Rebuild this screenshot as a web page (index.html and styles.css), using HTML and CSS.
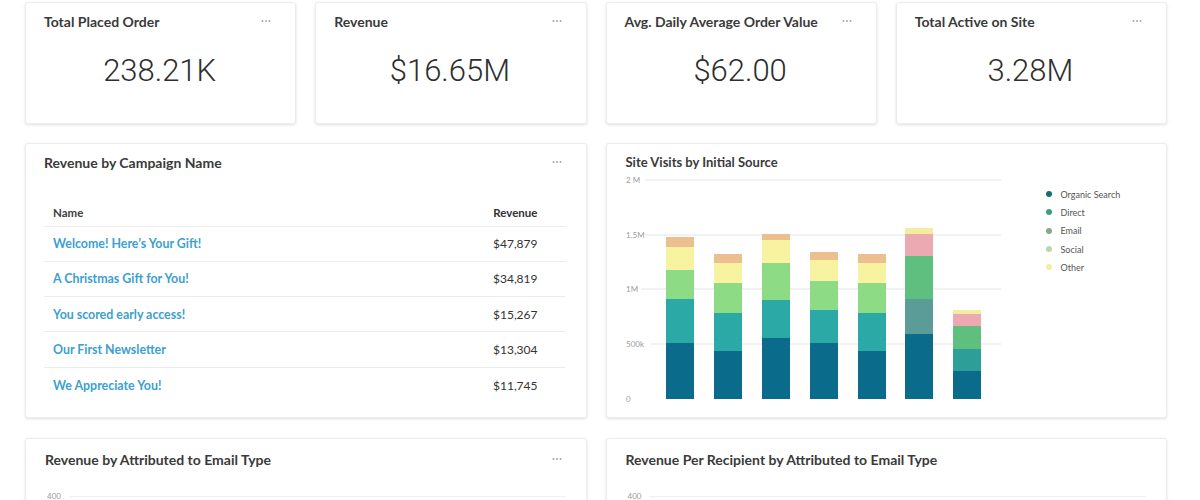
FILE: index.html
```html
<!DOCTYPE html>
<html lang="en">
<head>
<meta charset="utf-8">
<title>Dashboard</title>
<link rel="stylesheet" href="styles.css">
</head>
<body>
<div class="dash">
  <div class="kpis">
    <div class="card kpi">
      <div class="card-head"><span class="title">Total Placed Order</span><svg class="more" width="10" height="4" viewBox="0 0 10 4"><circle cx="1.5" cy="2" r="1"/><circle cx="5" cy="2" r="1"/><circle cx="8.5" cy="2" r="1"/></svg></div>
      <div class="value">238.21K</div>
    </div>
    <div class="card kpi">
      <div class="card-head"><span class="title">Revenue</span><svg class="more" width="10" height="4" viewBox="0 0 10 4"><circle cx="1.5" cy="2" r="1"/><circle cx="5" cy="2" r="1"/><circle cx="8.5" cy="2" r="1"/></svg></div>
      <div class="value">$16.65M</div>
    </div>
    <div class="card kpi">
      <div class="card-head"><span class="title">Avg. Daily Average Order Value</span><svg class="more" width="10" height="4" viewBox="0 0 10 4"><circle cx="1.5" cy="2" r="1"/><circle cx="5" cy="2" r="1"/><circle cx="8.5" cy="2" r="1"/></svg></div>
      <div class="value">$62.00</div>
    </div>
    <div class="card kpi">
      <div class="card-head"><span class="title">Total Active on Site</span><svg class="more" width="10" height="4" viewBox="0 0 10 4"><circle cx="1.5" cy="2" r="1"/><circle cx="5" cy="2" r="1"/><circle cx="8.5" cy="2" r="1"/></svg></div>
      <div class="value">3.28M</div>
    </div>
  </div>

  <div class="row2">
    <div class="card table-card">
      <div class="card-head"><span class="title">Revenue by Campaign Name</span><svg class="more" width="10" height="4" viewBox="0 0 10 4"><circle cx="1.5" cy="2" r="1"/><circle cx="5" cy="2" r="1"/><circle cx="8.5" cy="2" r="1"/></svg></div>
      <table class="camp">
        <thead><tr><th class="name">Name</th><th class="rev">Revenue</th></tr></thead>
        <tbody>
          <tr><td class="name"><a>Welcome! Here’s Your Gift!</a></td><td class="rev">$47,879</td></tr>
          <tr><td class="name"><a>A Christmas Gift for You!</a></td><td class="rev">$34,819</td></tr>
          <tr><td class="name"><a>You scored early access!</a></td><td class="rev">$15,267</td></tr>
          <tr><td class="name"><a>Our First Newsletter</a></td><td class="rev">$13,304</td></tr>
          <tr><td class="name"><a>We Appreciate You!</a></td><td class="rev">$11,745</td></tr>
        </tbody>
      </table>
    </div>

    <div class="card chart-card">
      <div class="card-head"><span class="title small">Site Visits by Initial Source</span></div>
      <div class="chart-body">
        <svg class="plot" width="390" height="236" viewBox="0 0 390 236">
          <g class="grid">
            <line x1="22" y1="9" x2="378" y2="9"/>
            <line x1="22" y1="64" x2="378" y2="64"/>
            <line x1="18" y1="118" x2="378" y2="118"/>
            <line x1="28" y1="173" x2="378" y2="173"/>
          </g>
          <g class="axis">
            <text x="3" y="12">2 M</text>
            <text x="3" y="67">1.5M</text>
            <text x="3" y="121">1M</text>
            <text x="3" y="176">500k</text>
            <text x="3" y="231">0</text>
          </g>
          <g class="bars">
            <rect x="43" y="66" width="28" height="10" fill="#ecc08e"/>
            <rect x="43" y="76" width="28" height="23" fill="#f7f3a1"/>
            <rect x="43" y="99" width="28" height="29" fill="#8ddc85"/>
            <rect x="43" y="128" width="28" height="44" fill="#2aa9a6"/>
            <rect x="43" y="172" width="28" height="56" fill="#0a6b8a"/>

            <rect x="91" y="83" width="28" height="9" fill="#ecc08e"/>
            <rect x="91" y="92" width="28" height="20" fill="#f7f3a1"/>
            <rect x="91" y="112" width="28" height="30" fill="#8ddc85"/>
            <rect x="91" y="142" width="28" height="38" fill="#2aa9a6"/>
            <rect x="91" y="180" width="28" height="48" fill="#0a6b8a"/>

            <rect x="139" y="63" width="28" height="6" fill="#ecc08e"/>
            <rect x="139" y="69" width="28" height="23" fill="#f7f3a1"/>
            <rect x="139" y="92" width="28" height="37" fill="#8ddc85"/>
            <rect x="139" y="129" width="28" height="38" fill="#2aa9a6"/>
            <rect x="139" y="167" width="28" height="61" fill="#0a6b8a"/>

            <rect x="187" y="81" width="28" height="8" fill="#ecc08e"/>
            <rect x="187" y="89" width="28" height="21" fill="#f7f3a1"/>
            <rect x="187" y="110" width="28" height="29" fill="#8ddc85"/>
            <rect x="187" y="139" width="28" height="33" fill="#2aa9a6"/>
            <rect x="187" y="172" width="28" height="56" fill="#0a6b8a"/>

            <rect x="235" y="83" width="28" height="9" fill="#ecc08e"/>
            <rect x="235" y="92" width="28" height="20" fill="#f7f3a1"/>
            <rect x="235" y="112" width="28" height="30" fill="#8ddc85"/>
            <rect x="235" y="142" width="28" height="38" fill="#2aa9a6"/>
            <rect x="235" y="180" width="28" height="48" fill="#0a6b8a"/>

            <rect x="282" y="57" width="28" height="6" fill="#f4ec9e"/>
            <rect x="282" y="63" width="28" height="22" fill="#eca9b2"/>
            <rect x="282" y="85" width="28" height="43" fill="#5fbf7f"/>
            <rect x="282" y="128" width="28" height="35" fill="#5c9c98"/>
            <rect x="282" y="163" width="28" height="65" fill="#0a6b8a"/>

            <rect x="330" y="139" width="28" height="4" fill="#f4ec9e"/>
            <rect x="330" y="143" width="28" height="12" fill="#eca9b2"/>
            <rect x="330" y="155" width="28" height="23" fill="#5fbf7f"/>
            <rect x="330" y="178" width="28" height="22" fill="#2e9e98"/>
            <rect x="330" y="200" width="28" height="28" fill="#0a6b8a"/>
          </g>
        </svg>
        <ul class="legend">
          <li><span class="dot c1"></span>Organic Search</li>
          <li><span class="dot c2"></span>Direct</li>
          <li><span class="dot c3"></span>Email</li>
          <li><span class="dot c4"></span>Social</li>
          <li><span class="dot c5"></span>Other</li>
        </ul>
      </div>
    </div>
  </div>

  <div class="row3">
    <div class="card bottom-card">
      <div class="card-head"><span class="title">Revenue by Attributed to Email Type</span><svg class="more" width="10" height="4" viewBox="0 0 10 4"><circle cx="1.5" cy="2" r="1"/><circle cx="5" cy="2" r="1"/><circle cx="8.5" cy="2" r="1"/></svg></div>
      <div class="mini-axis"><span class="tick">400</span><span class="gline"></span></div>
    </div>
    <div class="card bottom-card">
      <div class="card-head"><span class="title">Revenue Per Recipient by Attributed to Email Type</span></div>
      <div class="mini-axis"><span class="tick">400</span><span class="gline"></span></div>
    </div>
  </div>
</div>
</body>
</html>
```

FILE: styles.css
```css
* { box-sizing: border-box; }

html, body {
  margin: 0;
  padding: 0;
  background: #ffffff;
  overflow: hidden;
}

body {
  font-family: Lato, "Open Sans", "Liberation Sans", sans-serif;
  color: #333;
}

.dash {
  width: 1142px;
  margin-left: 25px;
  padding-top: 2px;
}

.card {
  background: #fff;
  border: 1px solid #ededed;
  border-radius: 3px;
  box-shadow: 0 1px 3px rgba(0, 0, 0, 0.13);
}

.card-head {
  display: flex;
  justify-content: space-between;
  align-items: center;
  height: 16px;
}

.title {
  font-size: 14px;
  font-weight: 700;
  color: #3a3a3a;
}

.title.small {
  font-size: 13px;
}

.more {
  fill: #a8a8a8;
  margin-right: 4px;
}

/* KPI row */
.kpis {
  display: grid;
  grid-template-columns: repeat(4, 1fr);
  gap: 19px;
}

.kpi {
  height: 122px;
  padding: 10px 20px 0 18px;
}

.value {
  text-align: center;
  font-family: Roboto, Lato, sans-serif;
  font-size: 31px;
  font-weight: 300;
  color: #2e2e2e;
  line-height: 38px;
  margin-top: 23px;
}

/* Row 2 */
.row2 {
  display: grid;
  grid-template-columns: 1fr 1fr;
  gap: 19px;
  margin-top: 19px;
}

.table-card {
  height: 275px;
  padding: 10px 20px 0 18px;
}

.camp {
  width: 100%;
  border-collapse: collapse;
  margin-top: 29px;
  font-size: 12px;
}

.camp th {
  font-weight: 700;
  font-size: 11.5px;
  color: #3e3e3e;
  height: 27px;
  padding: 0 9px;
  vertical-align: middle;
}

.camp td {
  height: 35.3px;
  padding: 0 9px;
  border-top: 1px solid #ececec;
  vertical-align: middle;
}

.camp .name { text-align: left; }

.camp .rev {
  text-align: right;
  padding-right: 28px;
  color: #333;
}

.camp a {
  color: #3c9fd0;
  font-weight: 700;
  font-size: 12.4px;
}

.chart-card {
  height: 275px;
  padding: 10px 18px 0 16px;
}

.chart-card .title {
  padding-left: 3px;
}

.chart-body {
  display: flex;
  align-items: flex-start;
  margin-top: 1px;
}

.plot .grid line {
  stroke: #e6e6e6;
  stroke-width: 1;
}

.plot .axis text {
  font-family: Lato, "Liberation Sans", sans-serif;
  font-size: 8px;
  fill: #9a9a9a;
}

.legend {
  list-style: none;
  margin: 14px 0 0 33px;
  padding: 0;
  font-size: 9px;
  color: #555;
}

.legend li {
  display: flex;
  align-items: center;
  height: 18.3px;
}

.dot {
  width: 6px;
  height: 6px;
  border-radius: 50%;
  margin-right: 9px;
}

.c1 { background: #176b73; }
.c2 { background: #3e9c80; }
.c3 { background: #88a592; }
.c4 { background: #bcd9a2; }
.c5 { background: #eef1a2; }

/* Row 3 */
.row3 {
  display: grid;
  grid-template-columns: 1fr 1fr;
  gap: 19px;
  margin-top: 20px;
}

.bottom-card {
  height: 120px;
  padding: 12px 20px 0 19px;
}

.mini-axis {
  display: flex;
  align-items: center;
  margin-top: 25px;
  padding-left: 2px;
}

.tick {
  font-size: 8px;
  line-height: 9px;
  color: #9a9a9a;
  margin-right: 8px;
}

.gline {
  flex: 1;
  height: 1px;
  background: #f0f0f0;
}
```
